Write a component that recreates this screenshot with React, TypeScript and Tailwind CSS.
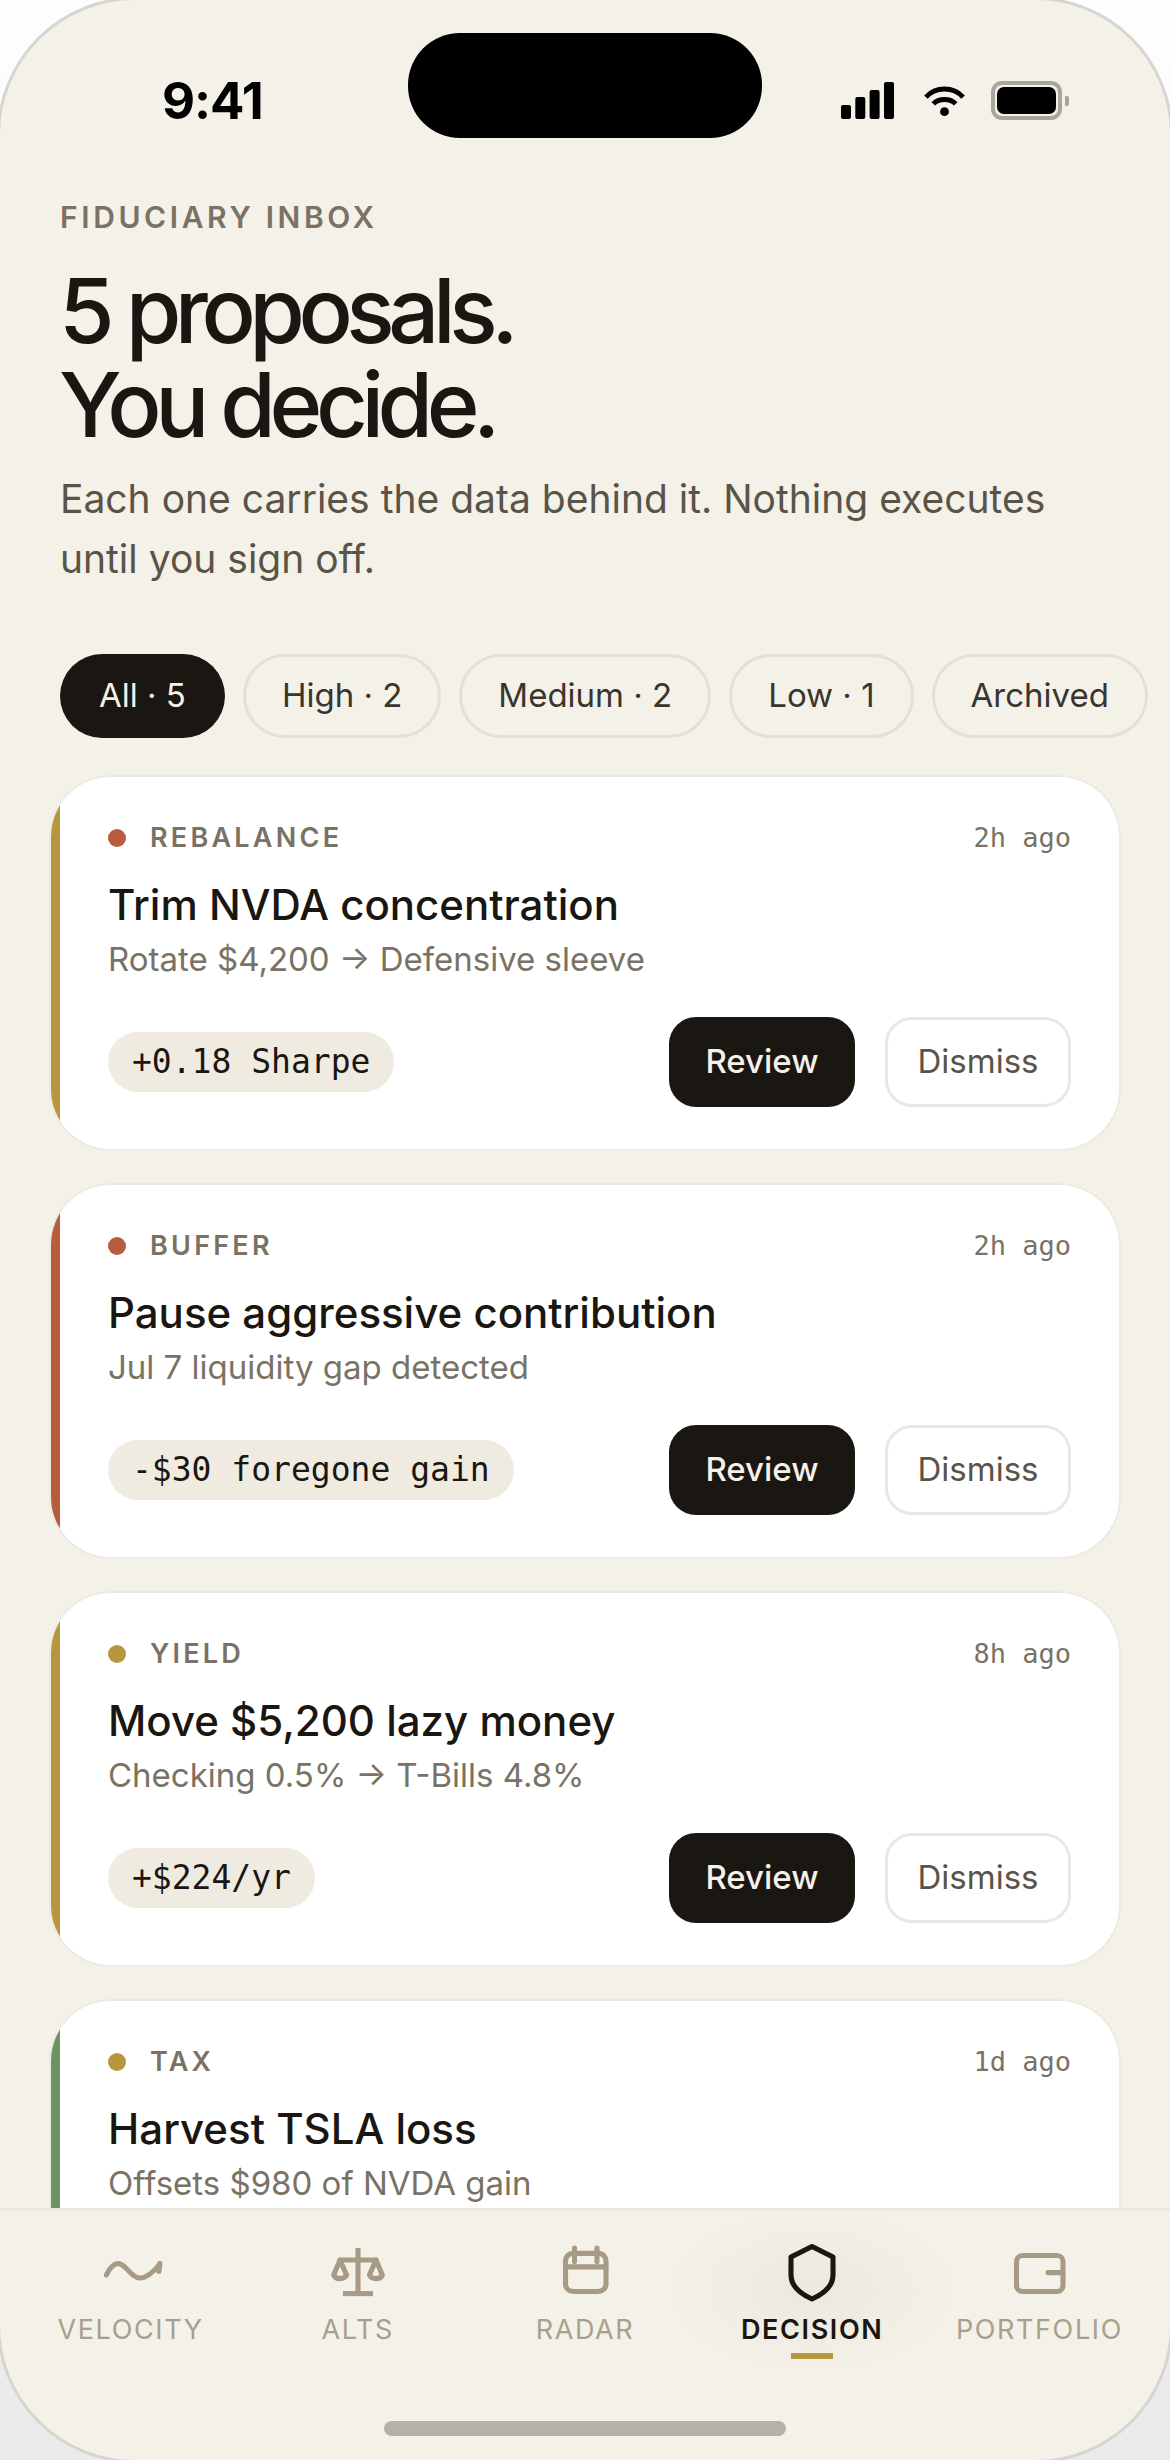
const inter = "font-['Inter','Noto_Sans',sans-serif]";

type Proposal = {
  tag: string;
  dot: string;
  edge: string;
  time: string;
  title: string;
  sub: string;
  metric: string;
};

const proposals: Proposal[] = [
  { tag: "REBALANCE", dot: "bg-[#b85c3e]", edge: "bg-[#b8963e]", time: "2h ago", title: "Trim NVDA concentration", sub: "Rotate $4,200 → Defensive sleeve", metric: "+0.18 Sharpe" },
  { tag: "BUFFER", dot: "bg-[#b85c3e]", edge: "bg-[#b85c3e]", time: "2h ago", title: "Pause aggressive contribution", sub: "Jul 7 liquidity gap detected", metric: "-$30 foregone gain" },
  { tag: "YIELD", dot: "bg-[#b8963e]", edge: "bg-[#b8963e]", time: "8h ago", title: "Move $5,200 lazy money", sub: "Checking 0.5% → T-Bills 4.8%", metric: "+$224/yr" },
  { tag: "TAX", dot: "bg-[#b8963e]", edge: "bg-[#6b9560]", time: "1d ago", title: "Harvest TSLA loss", sub: "Offsets $980 of NVDA gain", metric: "" },
];

const pills = ["All · 5", "High · 2", "Medium · 2", "Low · 1", "Archived"];

function StatusIcons() {
  return (
    <div className="flex items-center">
      <svg width="53" height="37" viewBox="0 0 53 37" fill="#000">
        <rect x="0" y="23" width="10" height="14" rx="2" />
        <rect x="14.300" y="15" width="10" height="22" rx="2" />
        <rect x="28.600" y="8" width="10" height="29" rx="2" />
        <rect x="43" y="0" width="10" height="37" rx="2" />
      </svg>
      <svg className="ml-[30px]" width="41" height="33" viewBox="0 0 42 33" fill="none" stroke="#000" strokeWidth="5">
        <path d="M2 13 C12 2 30 2 40 13" />
        <path d="M9.500 20 C15 14 27 14 32.500 20" />
        <circle cx="21" cy="28" r="4.500" fill="#000" stroke="none" />
      </svg>
      <div className="ml-[26px] flex items-center gap-[3px]">
        <div className="h-[39px] w-[71px] rounded-[11px] border-[4px] border-[#a8a59c] p-[2px]">
          <div className="h-full w-full rounded-[7px] bg-black" />
        </div>
        <div className="h-[10px] w-[4px] rounded-r-[2px] bg-[#a8a59c]" />
      </div>
    </div>
  );
}

function Card({ p }: { p: Proposal }) {
  return (
    <div className="relative h-[372px] w-full shrink-0 overflow-hidden rounded-[60px] bg-white pt-[43px] pr-[48px] pl-[57px] shadow-[0_0_0_2px_#eceae5]">
      <div className={`absolute top-0 bottom-0 left-0 w-[9px] ${p.edge}`} />
      <div className="flex h-[36px] items-center justify-between">
        <div className="flex items-center gap-[24px]">
          <span className={`h-[18px] w-[18px] rounded-full ${p.dot}`} />
          <span className="text-[27px] font-semibold tracking-[0.12em] text-[#7a7264]">{p.tag}</span>
        </div>
        <span className="font-['DejaVu_Sans_Mono',monospace] text-[27px] text-[#7a7264]">{p.time}</span>
      </div>
      <h2 className="mt-[22px] text-[42px] leading-[54px] font-medium text-[#1a1611]">{p.title}</h2>
      <p className="mt-[3px] text-[33px] leading-[48px] text-[#7a7264]">{p.sub}</p>
      {p.metric && (
        <div className="mt-[34px] flex items-center justify-between">
          <span className="flex h-[60px] items-center rounded-full bg-[#efebe0] px-[24px] font-['DejaVu_Sans_Mono',monospace] text-[33px] text-[#1a1611]">
            {p.metric}
          </span>
          <div className="flex gap-[30px]">
            <button className="h-[90px] w-[186px] rounded-[27px] bg-[#1a1611] text-[33px] font-medium text-[#f4f1e9]">Review</button>
            <button className="h-[90px] w-[186px] rounded-[27px] border-[3px] border-[#e9e7e3] bg-white text-[33px] text-[#5a5347]">Dismiss</button>
          </div>
        </div>
      )}
    </div>
  );
}

function TabIcon({ name }: { name: string }) {
  const color = name === "DECISION" ? "#1a1611" : "#a89b85";
  return (
    <svg width="66" height="66" viewBox="0 0 22 22" fill="none" stroke={color} strokeWidth="1.700" strokeLinejoin="round" strokeLinecap="round">
      {name === "VELOCITY" && (
        <>
          <path d="M2.800 12 C4 9.500 5.500 8 7 8.200 C9.500 8.500 11 13 14 13 C16.500 13 18.500 11 20.500 8.500" />
          <path d="M20.600 8.200 L20.300 10.800" />
        </>
      )}
      {name === "ALTS" && (
        <>
          <path d="M11 3 V18" strokeLinecap="butt" />
          <path d="M6 18.200 H16" strokeLinecap="butt" />
          <path d="M5 7 H17" />
          <path d="M5 7 L2.900 12 C3.500 13.600 6.500 13.600 7.200 12 Z" />
          <path d="M17 7 L14.800 12 C15.500 13.600 18.500 13.600 19.100 12 Z" />
        </>
      )}
      {name === "RADAR" && (
        <>
          <rect x="4.500" y="4.800" width="13.500" height="12.700" rx="2.500" />
          <path d="M4.500 9.300 H18" />
          <path d="M7.500 3 V7.500" />
          <path d="M15 3 V7.500" />
        </>
      )}
      {name === "DECISION" && <path d="M11 2.500 L18 6 V12 C18 15.800 14.800 18.300 11 20 C7.200 18.300 4 15.800 4 12 V6 Z" />}
      {name === "PORTFOLIO" && (
        <>
          <rect x="3.500" y="5.500" width="15.500" height="12" rx="2" />
          <path d="M14 11.200 H19" />
        </>
      )}
    </svg>
  );
}

function Tab({ name }: { name: string }) {
  const active = name === "DECISION";
  return (
    <div className="relative flex flex-1 flex-col items-center pt-[28px]">
      {active && (
        <div className="absolute top-[-6px] left-1/2 h-[170px] w-[300px] -translate-x-1/2 bg-[radial-gradient(closest-side,#ece8e0,transparent)]" />
      )}
      <div className="relative flex flex-col items-center">
        <TabIcon name={name} />
        <span className={`mt-[8px] text-[27px] leading-[34px] tracking-[0.06em] ${active ? "font-semibold text-[#1a1611]" : "text-[#a89f8c]"}`}>{name}</span>
        {active && <span className="mt-[6px] h-[6px] w-[42px] bg-[#b8963e]" />}
      </div>
    </div>
  );
}

export default function App() {
  return (
    <div className={`h-[2460px] w-[1170px] overflow-hidden bg-linear-to-b from-[#fdfdfd] to-[#eaeaea] ${inter}`}>
      {/* straight edges of the phone frame sit just past the viewport */}
      <div className="relative -m-[3px] flex h-[2466px] w-[1176px] flex-col overflow-hidden rounded-[138px] border-[3px] border-[#d6d5cf] bg-[#f4f1e9]">
        <div className="absolute top-[33px] left-1/2 h-[105px] w-[354px] -translate-x-1/2 rounded-[52px] bg-black" />

        <div className="flex h-[120px] shrink-0 items-end justify-between pr-[101px] pl-[162px]">
          <span className="text-[51px] leading-[38px] font-bold tracking-[-0.02em] text-black">9:41</span>
          <StatusIcons />
        </div>

        <div className="px-[60px] pt-[79px]">
          <div className="text-[30px] leading-[36px] font-semibold tracking-[0.12em] text-[#7a7264]">FIDUCIARY INBOX</div>
          <h1 className="mt-[29px] -ml-[1px] text-[90px] leading-[94px] font-medium tracking-[-0.072em] text-[#1a1611]">
            5 proposals.
            <br />
            You decide.
          </h1>
          <p className="mt-[17px] text-[39px] leading-[60px] text-[#5a5347]">
            Each one carries the data behind it. Nothing executes
            <br />
            until you sign off.
          </p>
        </div>

        <div className="mt-[65px] flex gap-[18px] pl-[60px]">
          {pills.map((t, i) => (
            <span
              key={t}
              className={`flex h-[84px] shrink-0 items-center rounded-full text-[33px] ${
                i === 0 ? "bg-[#1a1611] px-[39px] text-[#f4f1e9]" : "border-[3px] border-[#e4e0d5] px-[36px] text-[#3a352c]"
              }`}
            >
              {t}
            </span>
          ))}
        </div>

        <div className="mt-[37px] flex min-h-0 flex-1 flex-col gap-[36px] overflow-hidden px-[51px] pt-[2px]">
          {proposals.map((p) => (
            <Card key={p.title} p={p} />
          ))}
        </div>

        <div className="relative h-[252px] shrink-0 border-t-[3px] border-[#ebe8e0]">
          <div className="flex px-[17px]">
            {["VELOCITY", "ALTS", "RADAR", "DECISION", "PORTFOLIO"].map((n) => (
              <Tab key={n} name={n} />
            ))}
          </div>
          <div className="absolute bottom-[24px] left-1/2 h-[15px] w-[402px] -translate-x-1/2 rounded-full bg-[#b5b1a8]" />
        </div>
      </div>
    </div>
  );
}
